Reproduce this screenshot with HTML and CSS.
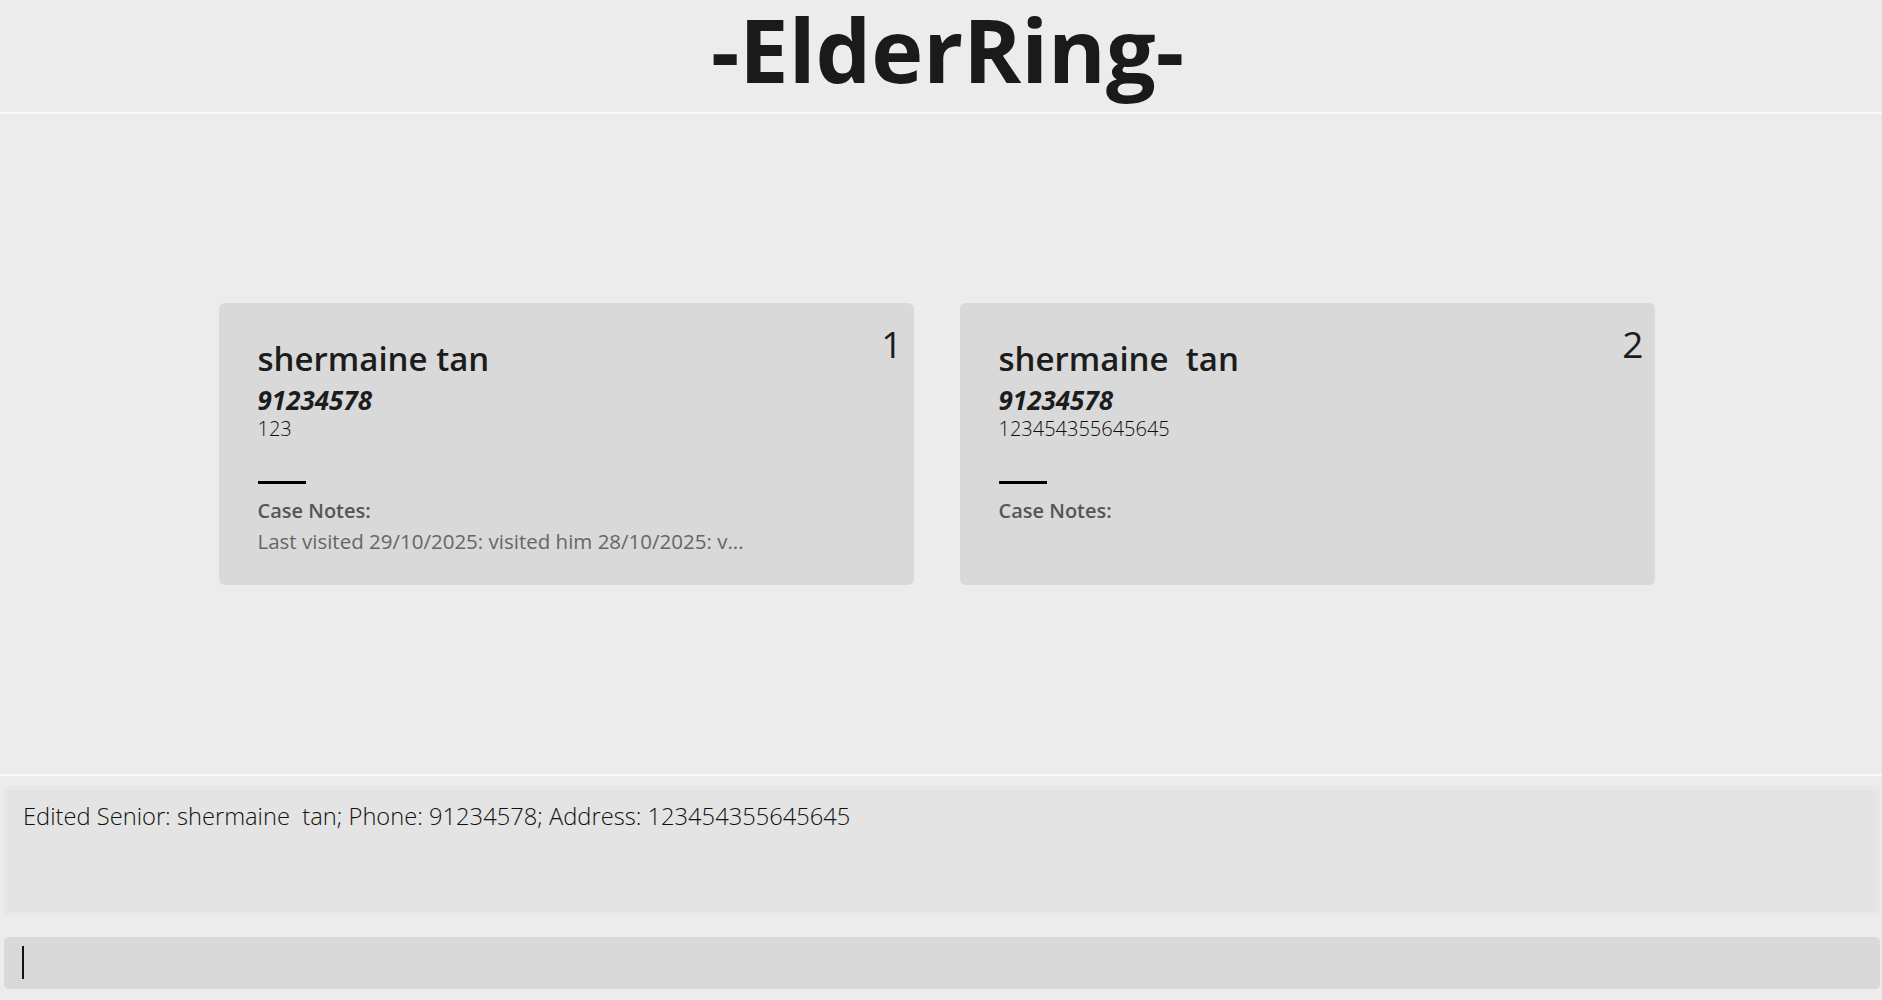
FILE: index.html
```html
<!DOCTYPE html>
<html lang="en">
<head>
<meta charset="utf-8">
<title>ElderRing</title>
<link rel="stylesheet" href="styles.css">
</head>
<body>
<div class="app">
  <header class="title-bar">
    <h1 class="title">-ElderRing-</h1>
  </header>
  <main class="list-area">
    <div class="cards">
      <article class="card">
        <div class="card-index">1</div>
        <div class="card-name">shermaine tan</div>
        <div class="card-phone">91234578</div>
        <div class="card-address">123</div>
        <div class="card-rule"></div>
        <div class="card-notes-label">Case Notes:</div>
        <div class="card-notes">Last visited 29/10/2025: visited him 28/10/2025: v...</div>
      </article>
      <article class="card">
        <div class="card-index">2</div>
        <div class="card-name">shermaine  tan</div>
        <div class="card-phone">91234578</div>
        <div class="card-address">123454355645645</div>
        <div class="card-rule"></div>
        <div class="card-notes-label">Case Notes:</div>
        <div class="card-notes"></div>
      </article>
    </div>
  </main>
  <section class="result">
    <div class="result-box">Edited Senior: shermaine  tan; Phone: 91234578; Address: 123454355645645</div>
  </section>
  <section class="command">
    <div class="command-box"><span class="caret"></span></div>
  </section>
</div>
</body>
</html>
```

FILE: styles.css
```css
* { box-sizing: border-box; }
html, body { margin: 0; padding: 0; }
body {
  background: #ececec;
  font-family: "Open Sans", "Noto Sans", sans-serif;
  color: #1c1c1c;
}
.app {
  height: 1000px;
  display: flex;
  flex-direction: column;
}
.title-bar {
  height: 114px;
  flex: 0 0 114px;
  border-bottom: 2px solid #f7f7f7;
  display: flex;
  justify-content: center;
  align-items: flex-start;
  padding-left: 13px;
}
.title {
  margin: 0;
  padding-bottom: 14px;
  font-size: 88px;
  font-weight: 700;
  line-height: 98px;
  color: #1a1a1a;
}
.list-area {
  flex: 1;
  display: flex;
  align-items: center;
  justify-content: center;
  padding-right: 9px;
  border-bottom: 2px solid #f7f7f7;
}
.cards {
  display: flex;
  gap: 46px;
}
.card {
  position: relative;
  width: 695px;
  height: 282px;
  background: #d9d9d9;
  border-radius: 6px;
  padding: 34px 39px 0 39px;
}
.card-index {
  position: absolute;
  top: 17px;
  right: 11px;
  font-size: 37px;
  line-height: 48px;
  color: #1c1c1c;
}
.card-name {
  font-size: 33px;
  font-weight: 600;
  line-height: 44px;
  white-space: pre;
  color: #1c1c1c;
}
.card-phone {
  font-size: 26px;
  font-weight: 700;
  font-style: italic;
  line-height: 30px;
  margin-top: 4px;
  color: #1c1c1c;
}
.card-address {
  margin-top: 1px;
  font-size: 20px;
  font-weight: 300;
  line-height: 26px;
  color: #0d0d0d;
}
.card-rule {
  width: 48px;
  height: 3px;
  background: #000;
  margin-top: 39px;
}
.card-notes-label {
  margin-top: 13px;
  font-size: 20px;
  font-weight: 600;
  line-height: 28px;
  color: #555;
}
.card-notes {
  margin-top: 2px;
  font-size: 20.5px;
  line-height: 28px;
  color: #666;
  white-space: nowrap;
}
.result {
  height: 150px;
  flex: 0 0 150px;
  padding: 10px 2px 10px 3px;
}
.result-box {
  height: 130px;
  border: 4px solid #e8e8e8;
  background: #e4e4e4;
  padding: 10px 16px;
  font-size: 23.7px;
  font-weight: 300;
  line-height: 32px;
  white-space: pre;
  color: #111;
}
.command {
  flex: 0 0 74px;
  padding: 11px 2px 10px 4px;
}
.command-box {
  height: 52px;
  background: #d9d9d9;
  border-radius: 5px;
  padding: 9px 0 0 18px;
}
.caret {
  display: block;
  width: 2px;
  height: 33px;
  background: #111;
}
```
